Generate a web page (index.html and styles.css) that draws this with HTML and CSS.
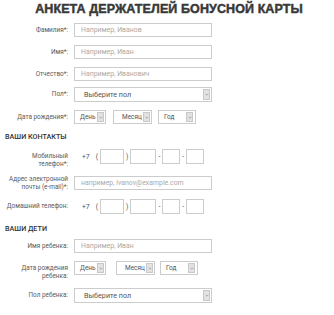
FILE: index.html
```html
<!DOCTYPE html>
<html lang="ru">
<head>
  <meta charset="UTF-8">
  <meta name="viewport" content="width=device-width, initial-scale=1">
  <title>Анкета держателей бонусной карты</title>
  <link rel="stylesheet" href="styles.css">
</head>
<body>

<div class="anketa">
  <h1>Анкета держателей бонусной карты</h1>
  <form id="anketaForm">
    <div class="row">
      <label for="lastName">Фамилия*:</label>
      <input type="text" id="lastName" placeholder="Например, Иванов">
    </div>
    <div class="row">
      <label for="firstName">Имя*:</label>
      <input type="text" id="firstName" placeholder="Например, Иван">
    </div>
    <div class="row tight">
      <label for="middleName">Отчество*:</label>
      <input type="text" id="middleName" placeholder="Например, Иванович">
    </div>
    <div class="row">
      <label>Пол*:</label>
      <div class="select wide">
        <span class="val">Выберите пол</span>
        <span class="arrow"><svg viewBox="0 0 6 4"><path d="M1 1 L3 3 L5 1" /></svg></span>
      </div>
    </div>
    <div class="row">
      <label>Дата рождения*:</label>
      <div class="date">
        <div class="select day">
          <span class="val">День</span>
          <span class="arrow"><svg viewBox="0 0 6 4"><path d="M1 1 L3 3 L5 1" /></svg></span>
        </div>
        <div class="select month">
          <span class="val">Месяц</span>
          <span class="arrow"><svg viewBox="0 0 6 4"><path d="M1 1 L3 3 L5 1" /></svg></span>
        </div>
        <div class="select year">
          <span class="val">Год</span>
          <span class="arrow"><svg viewBox="0 0 6 4"><path d="M1 1 L3 3 L5 1" /></svg></span>
        </div>
      </div>
    </div>

    <h3>Ваши контакты</h3>
    <div class="row">
      <label>Мобильный<br>телефон*:</label>
      <div class="phone">
        <span class="code">+7</span><span class="sep">(</span>
        <input type="text" class="p3">
        <span class="sep">)</span>
        <input type="text" class="p3 wider">
        <span class="sep">-</span>
        <input type="text" class="p2">
        <span class="sep">-</span>
        <input type="text" class="p2">
      </div>
    </div>
    <div class="row middle">
      <label for="email">Адрес электронной<br>почты (e-mail)*:</label>
      <input type="text" id="email" placeholder="например, ivanov@example.com">
    </div>
    <div class="row">
      <label>Домашний телефон:</label>
      <div class="phone">
        <span class="code">+7</span><span class="sep">(</span>
        <input type="text" class="p3">
        <span class="sep">)</span>
        <input type="text" class="p3 wider">
        <span class="sep">-</span>
        <input type="text" class="p2">
        <span class="sep">-</span>
        <input type="text" class="p2">
      </div>
    </div>

    <h3 class="kids">Ваши дети</h3>
    <div class="row">
      <label for="childName">Имя ребенка:</label>
      <input type="text" id="childName" placeholder="Например, Иван">
    </div>
    <div class="row">
      <label>Дата рождения<br>ребенка:</label>
      <div class="date kid">
        <div class="select day">
          <span class="val">День</span>
          <span class="arrow"><svg viewBox="0 0 6 4"><path d="M1 1 L3 3 L5 1" /></svg></span>
        </div>
        <div class="select month">
          <span class="val">Месяц</span>
          <span class="arrow"><svg viewBox="0 0 6 4"><path d="M1 1 L3 3 L5 1" /></svg></span>
        </div>
        <div class="select year">
          <span class="val">Год</span>
          <span class="arrow"><svg viewBox="0 0 6 4"><path d="M1 1 L3 3 L5 1" /></svg></span>
        </div>
      </div>
    </div>
    <div class="row">
      <label>Пол ребенка:</label>
      <div class="select wide">
        <span class="val">Выберите пол</span>
        <span class="arrow"><svg viewBox="0 0 6 4"><path d="M1 1 L3 3 L5 1" /></svg></span>
      </div>
    </div>
  </form>
</div>

</body>
</html>
```

FILE: styles.css
```css
body {
  margin: 0;
  font-family: Roboto, 'Liberation Sans', sans-serif;
  background: #fff;
  color: #555;
}

.anketa {
  width: 334px;
  padding-top: 3px;
}

.anketa h1 {
  margin: 0 0 7px 4px;
  text-align: center;
  font-family: 'Liberation Sans', Arial, sans-serif;
  font-weight: bold;
  font-size: 12.5px;
  line-height: 13px;
  letter-spacing: 0.1px;
  text-transform: uppercase;
  color: #383838;
  -webkit-text-stroke: 0.45px #383838;
}

.anketa h3 {
  margin: 0 0 8px 5px;
  font-size: 7.2px;
  line-height: 9px;
  font-weight: 500;
  text-transform: uppercase;
  color: #333;
}

.anketa h3.kids {
  margin-top: 10px;
  margin-bottom: 6px;
}

.row {
  display: flex;
  align-items: flex-start;
  margin-bottom: 8px;
}

.row.tight {
  margin-bottom: 6px;
}

.row.middle {
  align-items: center;
  margin-top: -1px;
}

.row label {
  width: 74px;
  padding: 3px 6px 0 0;
  box-sizing: border-box;
  text-align: right;
  font-size: 6.4px;
  line-height: 8px;
  color: #5a5a5a;
}

.row.middle label {
  padding-top: 0;
}

input[type="text"] {
  width: 138px;
  height: 14px;
  margin: 0;
  padding: 0 0 0 6px;
  border: 1px solid #ccc;
  box-sizing: border-box;
  font-family: inherit;
  font-size: 6.9px;
  color: #555;
}

input::placeholder {
  color: #aaa;
}

.select {
  display: flex;
  align-items: center;
  justify-content: space-between;
  height: 15px;
  padding: 1px 1px 1px 9px;
  border: 1px solid #ccc;
  box-sizing: border-box;
  background: #fff;
  font-size: 7.2px;
  color: #555;
}

.select .arrow {
  align-self: stretch;
  width: 7px;
  background: #e2e2e2;
  border: 1px solid #c8c8c8;
  box-sizing: border-box;
  display: flex;
  align-items: center;
  justify-content: center;
}

.arrow svg {
  width: 4px;
  height: 3px;
  fill: none;
  stroke: #8a8a8a;
  stroke-width: 1;
}

.select.wide {
  width: 138px;
}

.date {
  display: flex;
  gap: 6px;
}

.date .select {
  height: 14px;
  font-size: 6.5px;
}

.select.day {
  width: 32px;
  padding-left: 5px;
}

.select.month {
  width: 39px;
  padding-left: 8px;
  margin-left: 1px;
}

.select.year {
  width: 38px;
  padding-left: 5px;
  padding-right: 2px;
}

.date.kid {
  gap: 5px;
}

.date.kid .month {
  margin-left: 5px;
}

.phone {
  display: flex;
  align-items: center;
  font-size: 6.8px;
}

.phone span {
  color: #555;
}

.phone .code {
  margin: 0 4px 0 8px;
}

.phone .sep {
  margin: 0 2px;
}

.phone input[type="text"] {
  height: 15px;
  padding: 0;
}

.phone .p3 {
  width: 24px;
}

.phone .p3.wider {
  width: 26px;
}

.phone .p2 {
  width: 18px;
}
```
